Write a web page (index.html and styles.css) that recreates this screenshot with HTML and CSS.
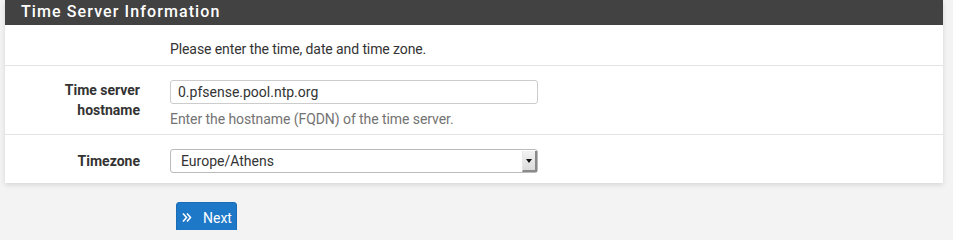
FILE: index.html
```html
<!DOCTYPE html>
<html>
<head>
<meta charset="utf-8">
<link rel="stylesheet" href="styles.css">
</head>
<body>
<div class="panel">
  <div class="panel-heading">Time Server Information</div>
  <div class="row row-intro">
    <div class="label-col"></div>
    <div class="field-col">Please enter the time, date and time zone.</div>
  </div>
  <div class="row row-host">
    <div class="label-col"><span class="lbl">Time server hostname</span></div>
    <div class="field-col">
      <div class="input">0.pfsense.pool.ntp.org</div>
      <div class="help">Enter the hostname (FQDN) of the time server.</div>
    </div>
  </div>
  <div class="row row-tz">
    <div class="label-col"><span class="lbl">Timezone</span></div>
    <div class="field-col">
      <div class="select"><span class="select-text">Europe/Athens</span><span class="select-btn"><span class="tri"></span></span></div>
    </div>
  </div>
</div>
<div class="actions">
  <button class="btn-next"><svg class="chev" width="10" height="11" viewBox="0 0 10 11"><path d="M1 1.5 L4.5 5.5 L1 9.5 M5 1.5 L8.5 5.5 L5 9.5" fill="none" stroke="#fff" stroke-width="1.6"/></svg>Next</button>
</div>
</body>
</html>
```
FILE: styles.css
```css
html, body {
  margin: 0;
  padding: 0;
}
body {
  background: #f3f3f3;
  font-family: Roboto, "Noto Sans", sans-serif;
  font-size: 14px;
  line-height: 20px;
  color: #333;
  height: 230px;
  overflow: hidden;
}
.panel {
  margin: 0 10px 0 5px;
  background: #fff;
  box-shadow: 0 2px 5px rgba(0,0,0,0.12);
}
.panel-heading {
  background: #424242;
  color: #fff;
  height: 25px;
  line-height: 24px;
  padding: 0 15px 0 16px;
  font-size: 16px;
  font-weight: 500;
  letter-spacing: 1.1px;
}
.row {
  display: flex;
  border-top: 1px solid #e3e3e3;
}
.row-intro {
  border-top: none;
  padding: 14px 0 6px;
  letter-spacing: -0.1px;
}
.row-host {
  padding: 14px 0 5px;
}
.row-tz {
  padding: 14px 0 10px;
}
.label-col {
  width: 150px;
  padding-right: 15px;
  box-sizing: border-box;
  text-align: right;
  flex: none;
}
.lbl {
  display: block;
  font-weight: 700;
  padding-left: 55px;
}
.row-tz .lbl {
  padding-top: 2px;
}
.field-col {
  margin-left: 15px;
  flex: 1;
}
.input {
  width: 368px;
  height: 24px;
  box-sizing: border-box;
  border: 1px solid #ccc;
  border-radius: 3px;
  padding: 0 7px;
  line-height: 22px;
  color: #333;
}
.help {
  margin-top: 5px;
  color: #737373;
  letter-spacing: -0.07px;
}
.select {
  width: 368px;
  height: 24px;
  box-sizing: border-box;
  border: 1px solid #bbb;
  border-radius: 3px;
  display: flex;
  align-items: stretch;
  line-height: 22px;
}
.select-text {
  flex: 1;
  padding-left: 10px;
}
.select-btn {
  width: 12px;
  margin: 1px 0 0;
  background: linear-gradient(#f2f2f2, #dcdcdc);
  border-right: 2px solid #8a8a8a;
  border-bottom: 2px solid #8a8a8a;
  border-left: 1px solid #e8e8e8;
  display: flex;
  align-items: center;
  justify-content: center;
}
.tri {
  width: 0;
  height: 0;
  border-left: 3px solid transparent;
  border-right: 3px solid transparent;
  border-top: 4px solid #111;
}
.actions {
  padding: 19px 0 0 176px;
}
.btn-next {
  font-family: Roboto, "Noto Sans", sans-serif;
  font-size: 14px;
  background: #1e78c8;
  color: #fff;
  border: 1px solid #1a6cb6;
  border-radius: 3px;
  height: 32px;
  padding: 0 4px 0 5px;
  display: flex;
  align-items: center;
}
.chev {
  margin-right: 11px;
  margin-top: -1px;
}
```
